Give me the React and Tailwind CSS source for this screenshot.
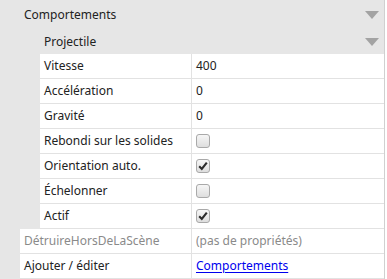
import React from "react";

const Tri = () => (
  <svg width="14" height="8" viewBox="0 0 14 8" className="shrink-0">
    <polygon points="0,0 14,0 7,8" fill="#a3a3a3" />
  </svg>
);

const Box = ({ checked }) => (
  <div className="w-[14px] h-[14px] rounded-[3px] border border-[#a9a9a9] bg-gradient-to-b from-[#f6f6f6] to-[#dedede] flex items-center justify-center">
    {checked && (
      <svg width="10" height="10" viewBox="0 0 10 10">
        <path d="M1.2 5.3 L3.8 8 L8.8 1.6" fill="none" stroke="#2b2b2b" strokeWidth="2.1" strokeLinejoin="miter" />
      </svg>
    )}
  </div>
);

const Row = ({ indent, label, children, labelClass = "text-[#222]" }) => (
  <div className="flex h-[25px] border-b border-[#e2e2e2] bg-white">
    <div
      className={`flex items-center pl-[4px] border-r border-[#e2e2e2] ${labelClass} ${indent === 40 ? "w-[152px]" : "w-[172px]"}`}
    >
      {label}
    </div>
    <div className="flex-1 flex items-center pl-[4px] text-[#222]">{children}</div>
  </div>
);

export default function App() {
  return (
    <div
      className="w-[387px] h-[279px] bg-white overflow-hidden text-[12px]"
      style={{ fontFamily: '"Noto Sans", "Open Sans", sans-serif' }}
    >
      <div className="w-[385px] h-full bg-[#e6e6e6] border-r border-[#d0d0d0]">
        <div className="pl-[20px]">
          <div className="h-[29px] flex items-center justify-between pl-[4px] pr-[5px] text-[#222]">
            <span>Comportements</span>
            <Tri />
          </div>
          <div className="pl-[20px]">
            <div className="h-[25px] flex items-center justify-between pl-[4px] pr-[5px] text-[#222]">
              <span>Projectile</span>
              <Tri />
            </div>
            <Row indent={40} label="Vitesse">400</Row>
            <Row indent={40} label="Accélération">0</Row>
            <Row indent={40} label="Gravité">0</Row>
            <Row indent={40} label="Rebondi sur les solides"><Box /></Row>
            <Row indent={40} label="Orientation auto."><Box checked /></Row>
            <Row indent={40} label="Échelonner"><Box /></Row>
            <Row indent={40} label="Actif"><Box checked /></Row>
          </div>
          <Row indent={20} label="DétruireHorsDeLaScène" labelClass="text-[#8a8a8a]">
            <span className="text-[#8a8a8a]">(pas de propriétés)</span>
          </Row>
          <Row indent={20} label="Ajouter / éditer">
            <a href="#" className="text-[#0000ee] underline underline-offset-2">Comportements</a>
          </Row>
        </div>
      </div>
    </div>
  );
}
